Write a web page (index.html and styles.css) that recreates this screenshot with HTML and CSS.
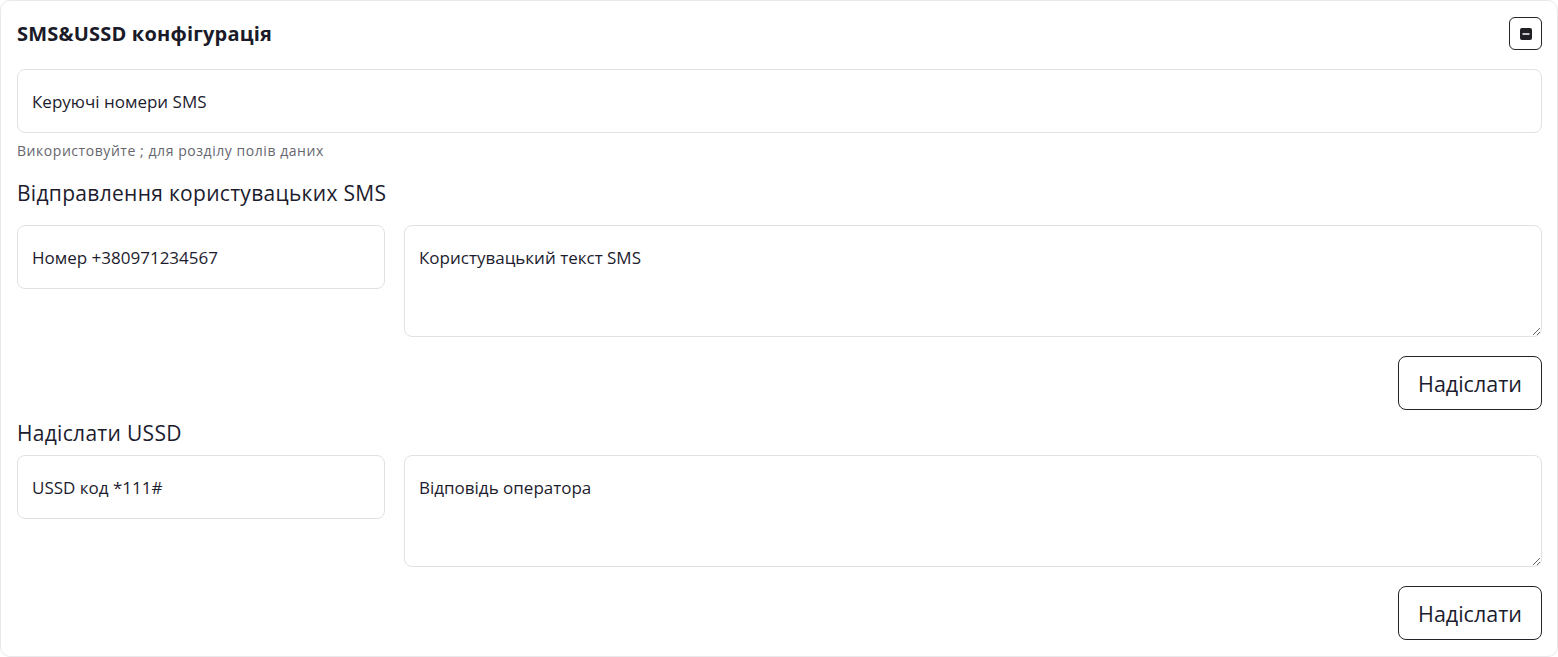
FILE: index.html
```html
<!DOCTYPE html>
<html lang="uk">
<head>
<meta charset="utf-8">
<title>SMS&amp;USSD конфігурація</title>
<link rel="stylesheet" href="styles.css">
</head>
<body>
<section class="card">
  <header class="card-header">
    <h2 class="card-title">SMS&amp;USSD конфігурація</h2>
    <button class="collapse-btn" type="button" aria-label="Згорнути">
      <svg width="12" height="12" viewBox="0 0 12 12" aria-hidden="true">
        <rect x="0" y="0" width="12" height="12" rx="2" fill="#1f1f24"/>
        <rect x="2.5" y="5.25" width="7" height="1.5" fill="#ffffff"/>
      </svg>
    </button>
  </header>

  <div class="field field-full">Керуючі номери SMS</div>
  <p class="help">Використовуйте ; для розділу полів даних</p>

  <h3 class="section-title first">Відправлення користувацьких SMS</h3>
  <div class="row">
    <div class="field field-small">Номер +380971234567</div>
    <textarea class="area">Користувацький текст SMS</textarea>
  </div>
  <div class="actions">
    <button class="send-btn" type="button">Надіслати</button>
  </div>

  <h3 class="section-title second">Надіслати USSD</h3>
  <div class="row">
    <div class="field field-small">USSD код *111#</div>
    <textarea class="area">Відповідь оператора</textarea>
  </div>
  <div class="actions">
    <button class="send-btn" type="button">Надіслати</button>
  </div>
</section>
</body>
</html>
```

FILE: styles.css
```css
* { box-sizing: border-box; }

html, body {
  margin: 0;
  padding: 0;
  background: #ffffff;
}

body {
  font-family: "Open Sans", "Noto Sans", "Liberation Sans", sans-serif;
  color: #1c1c2e;
}

.card {
  border: 1px solid #e9e9ec;
  border-radius: 10px;
  padding: 16px 16px 16px 16px;
  background: #ffffff;
  min-height: 657px;
}

.card-header {
  display: flex;
  align-items: center;
  justify-content: space-between;
  height: 33px;
}

.card-title {
  margin: 0;
  font-size: 20px;
  font-weight: 700;
  letter-spacing: 0.2px;
  color: #1a1a28;
}

.collapse-btn {
  width: 33px;
  height: 33px;
  border: 1px solid #232329;
  border-radius: 6px;
  background: #ffffff;
  display: flex;
  align-items: center;
  justify-content: center;
  padding: 0;
  margin-right: -1px;
}

.field {
  height: 64px;
  border: 1px solid #e2e2e6;
  border-radius: 8px;
  padding: 0 14px;
  display: flex;
  align-items: center;
  font-size: 17px;
  color: #1c1c2e;
}

.field-full {
  margin-top: 19px;
  margin-right: -1px;
}

.help {
  margin: 8px 0 0;
  font-size: 14px;
  line-height: 20px;
  letter-spacing: 0.55px;
  color: #66666e;
}

.section-title {
  margin: 0;
  font-size: 21px;
  font-weight: 400;
  line-height: 29px;
  letter-spacing: 0.3px;
  color: #1c1c2e;
}

.section-title.first { margin-top: 18px; margin-bottom: 17px; }
.section-title.second { margin-top: 9px; margin-bottom: 7px; }

.row {
  display: flex;
  gap: 19px;
  align-items: flex-start;
  margin-right: -1px;
}

.field-small {
  width: 368px;
  flex: 0 0 368px;
}

.area {
  flex: 1;
  height: 112px;
  border: 1px solid #e2e2e6;
  border-radius: 8px;
  padding: 20px 14px;
  font-family: inherit;
  font-size: 17px;
  line-height: 24px;
  color: #1c1c2e;
  resize: vertical;
  outline: none;
  margin: 0;
}

.actions {
  display: flex;
  justify-content: flex-end;
  margin-top: 19px;
  margin-right: -1px;
}

.send-btn {
  width: 144px;
  height: 54px;
  border: 1px solid #232329;
  border-radius: 8px;
  background: #ffffff;
  font-family: inherit;
  font-size: 21.5px;
  color: #1c1c2e;
  padding: 0;
}
```
